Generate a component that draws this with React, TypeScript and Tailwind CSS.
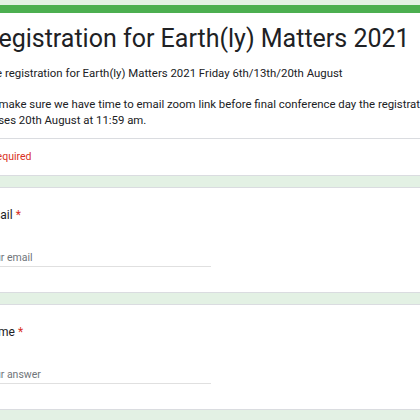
// Google Forms style registration page, viewed cropped on both sides
const body = { fontFamily: "Roboto, 'Liberation Sans', sans-serif" };

function ShortAnswer({ label, placeholder }: { label: string; placeholder: string }) {
  return (
    <div className="rounded-lg border border-[#dadce0] bg-white px-[18px] pt-[18px] pb-[25px]">
      <div className="text-[12px] leading-[18px] text-[#202124]">
        {label} <span className="text-[#d93025]">*</span>
      </div>
      <div className="mt-[26px] w-[228px] border-b border-[#e0e0e0] pb-[1px] text-[10.5px] leading-[15px] text-[#70757a]">
        {placeholder}
      </div>
    </div>
  );
}

export default function App() {
  return (
    <div className="h-[420px] w-[420px] overflow-hidden bg-[#e3f1e4] pt-[5px]" style={body}>
      <div className="ml-[-36px] flex w-[520px] flex-col gap-[11px]">
        {/* Header card */}
        <div className="rounded-lg border-x border-b border-t-[8px] border-[#dadce0] border-t-[#4caf50] bg-white">
          <div className="px-[18px] pt-[10px] pb-[10px]">
            <h1 className="text-[25px] leading-[32px] text-[#202124]">
              Registration for Earth(ly) Matters 2021
            </h1>
            <p className="mt-[11px] whitespace-pre-line text-[11.4px] leading-[15.5px] text-[#202124]">
              {"The registration for Earth(ly) Matters 2021 Friday 6th/13th/20th August\n\nTo make sure we have time to email zoom link before final conference day the registration closes 20th August at 11:59 am."}
            </p>
          </div>
          <div className="border-t border-[#dadce0] px-[18px] pt-[10px] pb-[11px] text-[10.5px] leading-[15px] text-[#d93025]">
            * Required
          </div>
        </div>

        <ShortAnswer label="Email" placeholder="Your email" />
        <ShortAnswer label="Name" placeholder="Your answer" />
      </div>
    </div>
  );
}
